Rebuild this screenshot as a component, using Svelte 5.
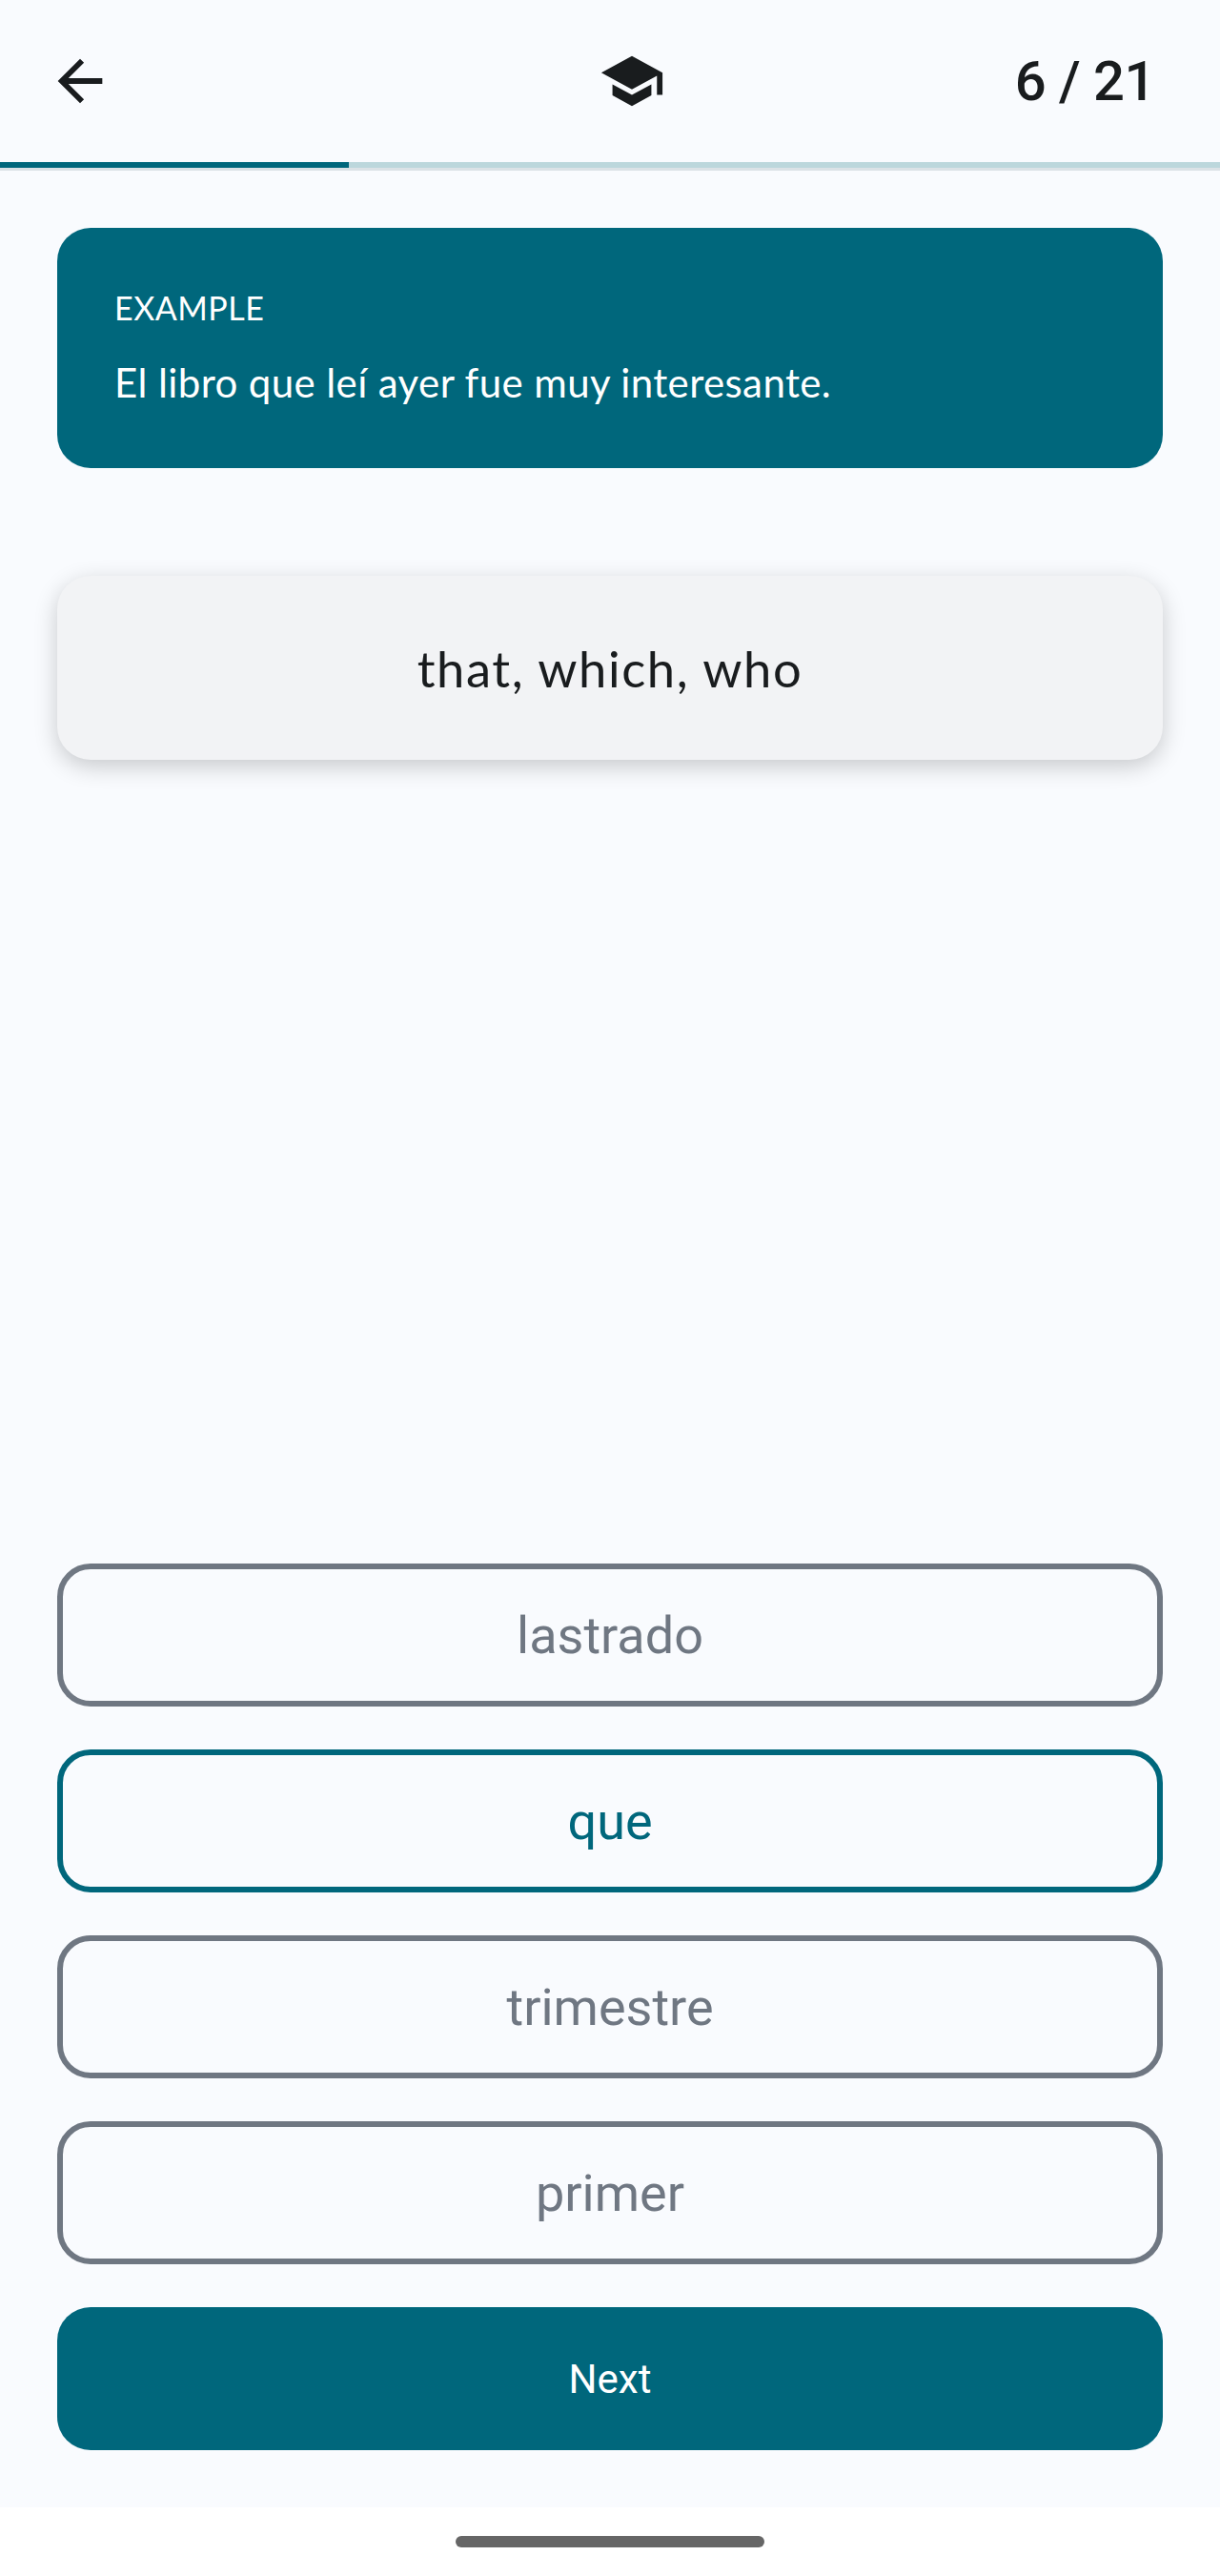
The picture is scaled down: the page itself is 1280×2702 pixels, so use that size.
<script>
  const options = [
    { label: 'lastrado', selected: false },
    { label: 'que', selected: true },
    { label: 'trimestre', selected: false },
    { label: 'primer', selected: false }
  ];
</script>

<div class="screen">
  <header class="topbar">
    <svg class="icon" viewBox="0 0 24 24" aria-label="Back"><path d="M20 11H7.83l5.59-5.59L12 4l-8 8 8 8 1.41-1.41L7.83 13H20v-2z" /></svg>
    <svg class="icon school" viewBox="0 0 24 24" aria-label="School"><path d="M5 13.18v4L12 21l7-3.82v-4L12 17l-7-3.82zM12 3L1 9l11 6 9-4.91V17h2V9L12 3z" /></svg>
    <span class="count">6 / 21</span>
  </header>
  <div class="track"><div class="fill"></div></div>

  <main class="content">
    <section class="example">
      <div class="eyebrow">EXAMPLE</div>
      <div class="sentence">El libro que leí ayer fue muy interesante.</div>
    </section>
    <section class="prompt">that, which, who</section>
    <div class="spacer"></div>
    <div class="options">
      {#each options as o}
        <button class="option" class:selected={o.selected}>{o.label}</button>
      {/each}
      <button class="next">Next</button>
    </div>
  </main>

  <footer class="navbar"><div class="pill"></div></footer>
</div>

<style>
  :global(body) { margin: 0; background: #fff; }
  .screen {
    width: 1280px;
    height: 2702px;
    display: flex;
    flex-direction: column;
    background: #f9fbfe;
    font-family: Roboto, sans-serif;
  }
  .topbar {
    height: 170px;
    box-sizing: border-box;
    padding: 0 68px 0 49px;
    display: flex;
    align-items: center;
  }
  .icon { width: 70px; height: 70px; fill: #191c1e; display: block; flex: none; }
  .school { margin-left: 509px; }
  .count {
    margin-left: auto;
    font-size: 58px;
    letter-spacing: -0.5px;
    color: #191c1e;
    font-weight: 500;
  }
  .track {
    height: 6px;
    background: #bcd7dc;
    border-bottom: 3px solid #dbe2e6;
  }
  .fill { width: 366px; height: 6px; background: #00677c; }
  .content {
    flex: 1;
    display: flex;
    flex-direction: column;
    padding: 60px 60px 60px;
    min-height: 0;
  }
  .example {
    height: 252px;
    box-sizing: border-box;
    background: #00677c;
    border-radius: 35px;
    padding: 63px 60px 0;
    color: #fff;
    font-family: Lato, sans-serif;
    font-weight: 400;
  }
  .eyebrow { font-size: 34px; line-height: 42px; letter-spacing: 0.5px; }
  .sentence { font-size: 42px; line-height: 56px; margin-top: 29px; letter-spacing: 0.4px; }
  .prompt {
    margin-top: 113px;
    height: 193px;
    display: flex;
    align-items: center;
    justify-content: center;
    background: #f2f3f5;
    border-radius: 35px;
    box-shadow: 0 7px 24px rgba(0, 0, 0, 0.2);
    font-family: Lato, sans-serif;
    font-size: 52.5px;
    letter-spacing: 1.6px;
    color: #191c1e;
  }
  .spacer { flex: 1; }
  .options { display: flex; flex-direction: column; gap: 45px; }
  .option, .next {
    height: 150px;
    width: 100%;
    box-sizing: border-box;
    border-radius: 35px;
    font-family: Roboto, sans-serif;
    padding: 0;
  }
  .option {
    background: transparent;
    border: 6px solid #6f7782;
    color: #6f7782;
    font-size: 54px;
  }
  .option.selected { border-color: #00677c; color: #00677c; }
  .next {
    background: #00677c;
    border: 0;
    color: #fff;
    font-size: 42px;
    font-weight: 400;
  }
  .navbar {
    height: 72px;
    flex: none;
    background: #fff;
    display: flex;
    justify-content: center;
    padding-top: 30px;
    box-sizing: border-box;
  }
  .pill { width: 324px; height: 12px; border-radius: 6px; background: #666; }
</style>
